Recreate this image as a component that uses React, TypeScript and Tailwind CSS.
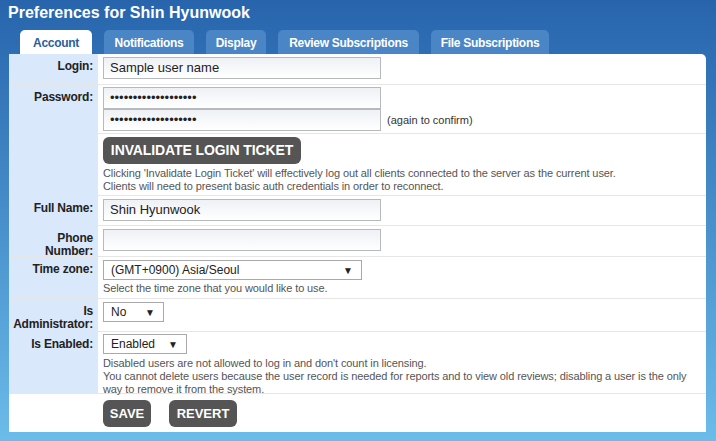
import React from "react";

const tabs = [
  { name: "Account", w: "w-[72px]" },
  { name: "Notifications", w: "w-[90px]" },
  { name: "Display", w: "w-[60px]" },
  { name: "Review Subscriptions", w: "w-[141px]" },
  { name: "File Subscriptions", w: "w-[118px]" },
];

function Row({ label, h, children, pt = "pt-[3px]" }: { label: React.ReactNode; h: string; children: React.ReactNode; pt?: string }) {
  return (
    <div className={h + " flex border-b border-[#e6e6e6]"}>
      <div className="w-[89px] shrink-0 bg-[#dae8fb] pr-[5px] pt-[6px] text-right text-[12px] font-bold leading-[13px] tracking-[-0.2px] text-[#222]">
        {label}
      </div>
      <div className={"flex-1 pl-[5px] " + pt}>{children}</div>
    </div>
  );
}

function TextBox({ value }: { value?: string }) {
  return (
    <div className="h-[22px] w-[278px] border border-[#b7b9bd] bg-gradient-to-b from-[#eef1f5] to-white px-[6px] text-[13px] leading-[20px] text-[#222]">
      {value}
    </div>
  );
}

function Select({ value, w }: { value: string; w: string }) {
  return (
    <div className={w + " flex h-[20px] items-center justify-between border border-[#a9a9a9] bg-white pl-[7px] pr-[8px] text-[12px] text-[#222]"}>
      <span>{value}</span>
      <span className="text-[10px]">▼</span>
    </div>
  );
}

function DarkButton({ children, w, size = "text-[13px]" }: { children: React.ReactNode; w: string; size?: string }) {
  return (
    <div className={w + " " + size + " flex h-[27px] items-center justify-center rounded-[6px] bg-[#555555] font-bold text-white"}>
      {children}
    </div>
  );
}

const Help = ({ children, mt = "mt-[2px]" }: { children: React.ReactNode; mt?: string }) => (
  <div className={mt + " text-[11px] leading-[13px] tracking-[-0.1px] text-[#555]"}>{children}</div>
);

const dots = "•••••••••••••••••••";

export default function App() {
  return (
    <div
      className="h-[441px] w-[716px] overflow-hidden bg-gradient-to-b from-[#2764ac] to-[#6cbcea]"
      style={{ fontFamily: "Tahoma, 'Liberation Sans', Arial, sans-serif" }}
    >
      <h1 className="px-[8px] pt-[4px] text-[16px] font-bold leading-[18px] text-white">Preferences for Shin Hyunwook</h1>
      <div className="mt-[8px] flex gap-[12px] pl-[20px]">
        {tabs.map((t, i) => (
          <div
            key={t.name}
            className={
              t.w +
              " flex h-[24px] items-center justify-center rounded-t-[5px] pt-[1px] text-[12px] font-bold tracking-[-0.3px] " +
              (i === 0 ? "bg-white text-[#2a5e9e]" : "bg-[#4a86c6] text-white")
            }
          >
            {t.name}
          </div>
        ))}
      </div>
      <div className="ml-[9px] w-[697px] rounded-tr-[5px] bg-white">
        <Row label="Login:" h="h-[31px]">
          <TextBox value="Sample user name" />
        </Row>
        <Row label="Password:" h="h-[49px]" pt="pt-[2px]">
          <div className="flex items-end gap-[6px]">
            <div className="flex flex-col">
              <TextBox value={dots} />
              <TextBox value={dots} />
            </div>
            <span className="pb-[3px] text-[11px] text-[#333]">(again to confirm)</span>
          </div>
        </Row>
        <Row label="" h="h-[62px]">
          <DarkButton w="w-[198px]" size="text-[14px] tracking-[-0.1px]">INVALIDATE LOGIN TICKET</DarkButton>
          <Help mt="mt-[3px]">
            Clicking 'Invalidate Login Ticket' will effectively log out all clients connected to the server as the current user.
            <br />
            Clients will need to present basic auth credentials in order to reconnect.
          </Help>
        </Row>
        <Row label="Full Name:" h="h-[30px]">
          <TextBox value="Shin Hyunwook" />
        </Row>
        <Row label={<>Phone<br />Number:</>} h="h-[31px]">
          <TextBox />
        </Row>
        <Row label="Time zone:" h="h-[42px]">
          <Select value="(GMT+0900) Asia/Seoul" w="w-[259px]" />
          <Help>Select the time zone that you would like to use.</Help>
        </Row>
        <Row label={<>Is<br />Administrator:</>} h="h-[33px]">
          <Select value="No" w="w-[61px]" />
        </Row>
        <Row label="Is Enabled:" h="h-[62px]" pt="pt-[2px]">
          <Select value="Enabled" w="w-[84px]" />
          <Help mt="mt-[3px]">
            Disabled users are not allowed to log in and don't count in licensing.
            <br />
            You cannot delete users because the user record is needed for reports and to view old reviews; disabling a user is the only way to remove it from the system.
          </Help>
        </Row>
        <div className="flex h-[38px] gap-[18px] pl-[94px] pt-[6px]">
          <DarkButton w="w-[48px]">SAVE</DarkButton>
          <DarkButton w="w-[68px]">REVERT</DarkButton>
        </div>
      </div>
    </div>
  );
}
